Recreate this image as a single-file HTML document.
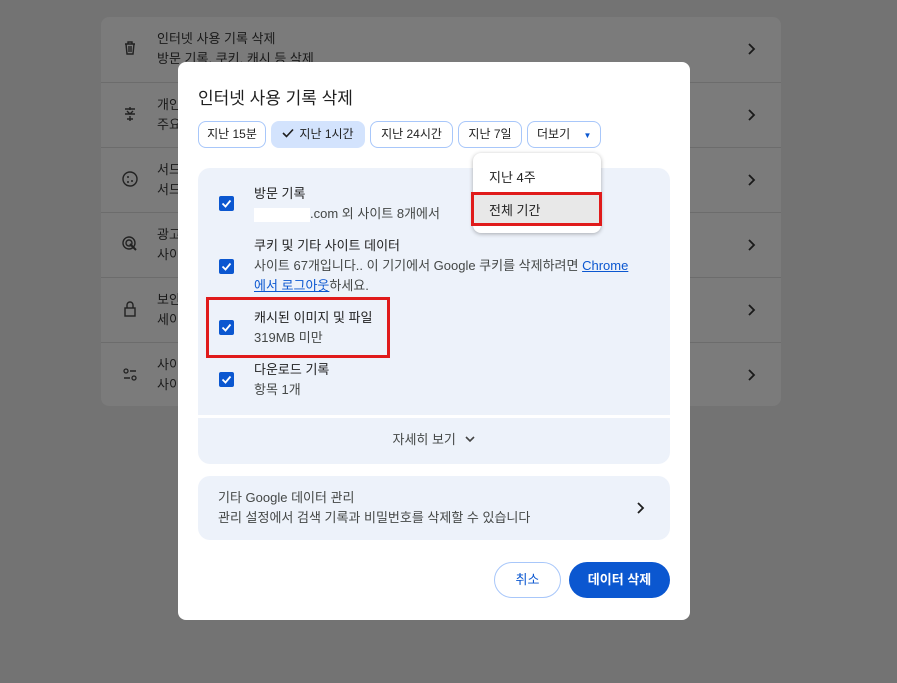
<!DOCTYPE html>
<html><head><meta charset="utf-8"><style>
*{box-sizing:border-box;margin:0;padding:0}
body{width:897px;height:683px;background:#737373;font-family:"Liberation Sans","Noto Sans CJK KR",sans-serif;position:relative;overflow:hidden;color:#1f1f1f}
.abs{position:absolute}
.card{left:101px;top:17px;width:680px;height:389px;background:#7b7b7b;border-radius:8px}
.row{position:absolute;left:0;width:680px;height:65px;border-top:1px solid #6c6c6c}
.row .t{position:absolute;left:56px;top:12px;font-size:13px;color:#1a1a1a;line-height:20px}
.row .ch{position:absolute;right:24px;top:25px}
.ic{position:absolute;left:20px;top:22px}
.dlg{left:178px;top:62px;width:512px;height:558px;background:#fff;border-radius:8px}
.chip{position:absolute;top:121px;height:27px;border:1px solid #a8c7fa;border-radius:8px;font-size:12px;line-height:25px;text-align:center;color:#1f1f1f;background:#fff}
.panel{position:absolute;left:198px;width:472px;background:#edf2fa}
.cb{position:absolute;left:219px;width:15px;height:15px;background:#0b57d0;border-radius:2px}
.cb svg{position:absolute;left:2px;top:2px}
.it{position:absolute;left:254px;font-size:13px;line-height:20px;color:#1f1f1f}
.it .s{color:#444746}
a{color:#0b57d0;text-decoration:underline}
.red{position:absolute;border:3px solid #e01b1b}
</style></head><body>
<div class="abs card">
 <div class="row" style="top:0;border-top:none"><svg class="ic" width="18" height="18" viewBox="0 0 18 18"><path d="M4 5h10M7 5V3h4v2M5 5l1 10h6l1-10M8 7v6M10 7v6" stroke="#222" stroke-width="1.4" fill="none"/></svg><div class="t">인터넷 사용 기록 삭제<br>방문 기록, 쿠키, 캐시 등 삭제</div><svg class="ch" width="10" height="14"><path d="M2 2l5 5-5 5" stroke="#1a1a1a" stroke-width="1.8" fill="none"/></svg></div>
 <div class="row" style="top:65px"><svg class="ic" width="18" height="18"><path d="M4 4h10M9 2v3M4 9h10M6 6l3 3 3-3M9 11v5M6 14h6" stroke="#222" stroke-width="1.4" fill="none"/></svg><div class="t">개인정보 보호 가이드<br>주요 설정 검토</div><svg class="ch" width="10" height="14"><path d="M2 2l5 5-5 5" stroke="#1a1a1a" stroke-width="1.8" fill="none"/></svg></div>
 <div class="row" style="top:130px"><svg class="ic" width="18" height="18"><circle cx="9" cy="9" r="7" stroke="#222" stroke-width="1.4" fill="none"/><circle cx="7" cy="7" r="1" fill="#222"/><circle cx="11" cy="11" r="1" fill="#222"/><circle cx="7" cy="12" r="1" fill="#222"/></svg><div class="t">서드파티 쿠키<br>서드파티 쿠키 차단됨</div><svg class="ch" width="10" height="14"><path d="M2 2l5 5-5 5" stroke="#1a1a1a" stroke-width="1.8" fill="none"/></svg></div>
 <div class="row" style="top:195px"><svg class="ic" width="18" height="18"><circle cx="8" cy="8" r="6" stroke="#222" stroke-width="1.4" fill="none"/><circle cx="8" cy="8" r="3" stroke="#222" stroke-width="1.4" fill="none"/><path d="M9 9l6 6" stroke="#222" stroke-width="2"/></svg><div class="t">광고 개인정보 보호<br>사이트에서 광고를 표시</div><svg class="ch" width="10" height="14"><path d="M2 2l5 5-5 5" stroke="#1a1a1a" stroke-width="1.8" fill="none"/></svg></div>
 <div class="row" style="top:260px"><svg class="ic" width="18" height="18"><rect x="4" y="8" width="10" height="8" stroke="#222" stroke-width="1.4" fill="none"/><path d="M6 8V5a3 3 0 016 0v3" stroke="#222" stroke-width="1.4" fill="none"/></svg><div class="t">보안<br>세이프 브라우징</div><svg class="ch" width="10" height="14"><path d="M2 2l5 5-5 5" stroke="#1a1a1a" stroke-width="1.8" fill="none"/></svg></div>
 <div class="row" style="top:325px"><svg class="ic" width="18" height="18"><circle cx="5" cy="6" r="2" stroke="#222" fill="none" stroke-width="1.3"/><path d="M9 6h6M3 13h6" stroke="#222" stroke-width="1.4"/><circle cx="13" cy="13" r="2" stroke="#222" fill="none" stroke-width="1.3"/></svg><div class="t">사이트 설정<br>사이트에서 사용하고 표시</div><svg class="ch" width="10" height="14"><path d="M2 2l5 5-5 5" stroke="#1a1a1a" stroke-width="1.8" fill="none"/></svg></div>
</div>

<div class="abs dlg"></div>
<div class="abs" style="left:198px;top:84px;font-size:17px;color:#1f1f1f">인터넷 사용 기록 삭제</div>
<div class="chip" style="left:198px;width:68px">지난 15분</div>
<div class="chip" style="left:271px;width:94px;background:#d3e3fd;border-color:#d3e3fd"><svg width="12" height="10" style="margin-right:5px"><path d="M1 5l3.5 3.5L11 1.5" stroke="#1f1f1f" stroke-width="1.6" fill="none"/></svg>지난 1시간</div>
<div class="chip" style="left:370px;width:83px">지난 24시간</div>
<div class="chip" style="left:458px;width:64px">지난 7일</div>
<div class="chip" style="left:527px;width:74px;text-align:left;padding-left:9px">더보기 <span style="color:#0b57d0;font-size:8px;margin-left:10px">▼</span></div>

<div class="panel" style="top:168px;height:247px;border-radius:12px 12px 0 0"></div>
<div class="cb" style="top:196px"><svg width="11" height="11"><path d="M1.5 5.5l3 3 5-6" stroke="#fff" stroke-width="1.8" fill="none"/></svg></div>
<div class="it" style="top:184px">방문 기록<br><span class="s"><span style="display:inline-block;width:56px;height:14px;background:#fff;vertical-align:middle"></span>.com 외 사이트 8개에서</span></div>
<div class="cb" style="top:259px"><svg width="11" height="11"><path d="M1.5 5.5l3 3 5-6" stroke="#fff" stroke-width="1.8" fill="none"/></svg></div>
<div class="it" style="top:236px">쿠키 및 기타 사이트 데이터<br><span class="s">사이트 67개입니다.. 이 기기에서 Google 쿠키를 삭제하려면 <a>Chrome</a><br><a>에서 로그아웃</a>하세요.</span></div>
<div class="cb" style="top:320px"><svg width="11" height="11"><path d="M1.5 5.5l3 3 5-6" stroke="#fff" stroke-width="1.8" fill="none"/></svg></div>
<div class="it" style="top:308px">캐시된 이미지 및 파일<br><span class="s">319MB 미만</span></div>
<div class="cb" style="top:372px"><svg width="11" height="11"><path d="M1.5 5.5l3 3 5-6" stroke="#fff" stroke-width="1.8" fill="none"/></svg></div>
<div class="it" style="top:360px">다운로드 기록<br><span class="s">항목 1개</span></div>
<div class="red" style="left:206px;top:297px;width:184px;height:61px"></div>

<div class="panel" style="top:418px;height:46px;border-radius:0 0 12px 12px;text-align:center;font-size:13px;line-height:44px;color:#444746">자세히 보기 <svg width="12" height="10" style="margin-left:4px"><path d="M2 3l4 4 4-4" stroke="#444" stroke-width="1.6" fill="none"/></svg></div>

<div class="panel" style="top:476px;height:64px;border-radius:12px"></div>
<div class="it" style="left:218px;top:488px;color:#444746">기타 Google 데이터 관리<br>관리 설정에서 검색 기록과 비밀번호를 삭제할 수 있습니다</div>
<svg class="abs" style="left:636px;top:501px" width="10" height="14"><path d="M2 2l5 5-5 5" stroke="#1f1f1f" stroke-width="1.8" fill="none"/></svg>

<div class="abs" style="left:494px;top:562px;width:67px;height:36px;border:1px solid #a8c7fa;border-radius:18px;text-align:center;line-height:34px;font-size:13px;color:#0b57d0">취소</div>
<div class="abs" style="left:569px;top:562px;width:101px;height:36px;background:#0b57d0;border-radius:18px;text-align:center;line-height:36px;font-size:13px;color:#fff;font-weight:bold">데이터 삭제</div>

<div class="abs" style="left:473px;top:153px;width:128px;height:80px;background:#fff;border-radius:8px;box-shadow:0 1px 4px rgba(0,0,0,.3)"></div>
<div class="abs" style="left:489px;top:167px;font-size:13px;color:#1f1f1f">지난 4주</div>
<div class="abs" style="left:474px;top:193px;width:126px;height:31px;background:#e8e8e8"></div>
<div class="abs" style="left:489px;top:200px;font-size:13px;color:#1f1f1f">전체 기간</div>
<div class="red" style="left:471px;top:192px;width:131px;height:34px"></div>
</body></html>
